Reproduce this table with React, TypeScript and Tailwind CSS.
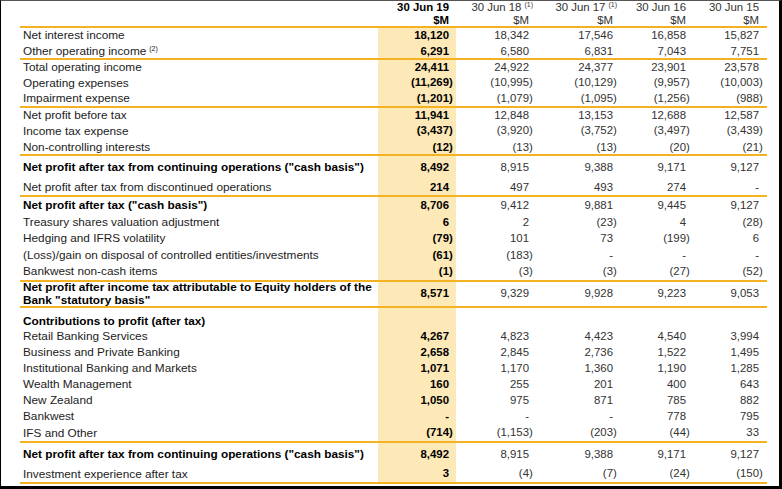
import React from 'react';

type Row =
    | { kind: 'line' }
    | { kind: 'row'; label: React.ReactNode; values: string[]; bold?: boolean; h: number; pt?: number };

const COLS = [
    { w: 'w-[78px]', pr: 'pr-[3px]' },
    { w: 'w-[79px]', pr: 'pr-[2px]' },
    { w: 'w-[84px]', pr: 'pr-[2px]' },
    { w: 'w-[73px]', pr: 'pr-[2px]' },
    { w: 'w-[75px]', pr: 'pr-[4px]' },
];

const Sup: React.FC<{ children: React.ReactNode }> = ({ children }) => (
    <span className="relative -top-[4px] ml-[3px] text-[7px] leading-none">{children}</span>
);

const ROWS: Row[] = [
    { kind: 'line' },
    { kind: 'row', h: 15, label: 'Net interest income', values: ['18,120', '18,342', '17,546', '16,858', '15,827'] },
    { kind: 'row', h: 14.5, pt: 2, label: <>Other operating income<Sup>(2)</Sup></>, values: ['6,291', '6,580', '6,831', '7,043', '7,751'] },
    { kind: 'line' },
    { kind: 'row', h: 15.5, label: 'Total operating income', values: ['24,411', '24,922', '24,377', '23,901', '23,578'] },
    { kind: 'row', h: 15.5, label: 'Operating expenses', values: ['(11,269)', '(10,995)', '(10,129)', '(9,957)', '(10,003)'] },
    { kind: 'row', h: 15.5, label: 'Impairment expense', values: ['(1,201)', '(1,079)', '(1,095)', '(1,256)', '(988)'] },
    { kind: 'line' },
    { kind: 'row', h: 15.3, label: 'Net profit before tax', values: ['11,941', '12,848', '13,153', '12,688', '12,587'] },
    { kind: 'row', h: 15.3, label: 'Income tax expense', values: ['(3,437)', '(3,920)', '(3,752)', '(3,497)', '(3,439)'] },
    { kind: 'row', h: 15.4, pt: 2, label: 'Non-controlling interests', values: ['(12)', '(13)', '(13)', '(20)', '(21)'] },
    { kind: 'line' },
    { kind: 'row', h: 22.5, pt: 1, bold: true, label: 'Net profit after tax from continuing operations ("cash basis")', values: ['8,492', '8,915', '9,388', '9,171', '9,127'] },
    { kind: 'row', h: 17, pt: 1, label: 'Net profit after tax from discontinued operations', values: ['214', '497', '493', '274', '-'] },
    { kind: 'line' },
    { kind: 'row', h: 16.5, bold: true, label: 'Net profit after tax ("cash basis")', values: ['8,706', '9,412', '9,881', '9,445', '9,127'] },
    { kind: 'row', h: 16.5, label: 'Treasury shares valuation adjustment', values: ['6', '2', '(23)', '4', '(28)'] },
    { kind: 'row', h: 16.5, label: 'Hedging and IFRS volatility', values: ['(79)', '101', '73', '(199)', '6'] },
    { kind: 'row', h: 16.5, label: '(Loss)/gain on disposal of controlled entities/investments', values: ['(61)', '(183)', '-', '-', '-'] },
    { kind: 'row', h: 16.5, label: 'Bankwest non-cash items', values: ['(1)', '(3)', '(3)', '(27)', '(52)'] },
    { kind: 'line' },
    { kind: 'row', h: 24, bold: true, label: <>Net profit after income tax attributable to Equity holders of the<br />Bank "statutory basis"</>, values: ['8,571', '9,329', '9,928', '9,223', '9,053'] },
    { kind: 'line' },
    { kind: 'row', h: 20, pt: 6, bold: true, label: 'Contributions to profit (after tax)', values: ['', '', '', '', ''] },
    { kind: 'row', h: 16.14, label: 'Retail Banking Services', values: ['4,267', '4,823', '4,423', '4,540', '3,994'] },
    { kind: 'row', h: 16.14, label: 'Business and Private Banking', values: ['2,658', '2,845', '2,736', '1,522', '1,495'] },
    { kind: 'row', h: 16.14, label: 'Institutional Banking and Markets', values: ['1,071', '1,170', '1,360', '1,190', '1,285'] },
    { kind: 'row', h: 16.14, label: 'Wealth Management', values: ['160', '255', '201', '400', '643'] },
    { kind: 'row', h: 16.14, label: 'New Zealand', values: ['1,050', '975', '871', '785', '882'] },
    { kind: 'row', h: 16.14, label: 'Bankwest', values: ['-', '-', '-', '778', '795'] },
    { kind: 'row', h: 16.14, label: 'IFS and Other', values: ['(714)', '(1,153)', '(203)', '(44)', '33'] },
    { kind: 'line' },
    { kind: 'row', h: 22, pt: 1, bold: true, label: 'Net profit after tax from continuing operations ("cash basis")', values: ['8,492', '8,915', '9,388', '9,171', '9,127'] },
    { kind: 'row', h: 17.3, pt: 1, label: 'Investment experience after tax', values: ['3', '(4)', '(7)', '(24)', '(150)'] },
    { kind: 'line' },
];

const Num: React.FC<{ v: string }> = ({ v }) => {
    const neg = v.startsWith('(');
    const body = neg ? v.slice(0, -1) : v;
    return (
        <>
            {body}
            <span className="inline-block w-[4px] text-left">{neg ? ')' : ''}</span>
        </>
    );
};

const HEADERS: { date: string; sup?: boolean }[] = [
    { date: '30 Jun 19' },
    { date: '30 Jun 18', sup: true },
    { date: '30 Jun 17', sup: true },
    { date: '30 Jun 16' },
    { date: '30 Jun 15' },
];

export default function App() {
    return (
        <div
            className="w-[782px] h-[489px] bg-white border-t border-l border-r-[3px] border-b-[3px] border-t-[#555] border-l-black border-r-black border-b-black overflow-hidden text-[11.4px] text-[#222]"
            style={{ fontFamily: '"Liberation Sans", Arial, sans-serif' }}
        >
            <div className="ml-[19px] w-[747px]">
                {/* header */}
                <div className="flex h-[25px] leading-[13px]">
                    <div className="w-[358px]" />
                    {HEADERS.map((h, i) => (
                        <div key={h.date} className={`${COLS[i].w} ${COLS[i].pr} text-right ${i === 0 ? 'font-bold text-black' : 'text-[#333]'}`}>
                            <div className="whitespace-nowrap">
                                {h.date}
                                {h.sup && <Sup>(1)</Sup>}
                                {!h.sup && <span className="inline-block w-[4px]" />}
                            </div>
                            <div>
                                $M<span className="inline-block w-[4px]" />
                            </div>
                        </div>
                    ))}
                </div>

                {ROWS.map((r, idx) =>
                    r.kind === 'line' ? (
                        <div key={idx} className="h-[2px] bg-[#f4b223]" />
                    ) : (
                        <div key={idx} className="flex" style={{ height: r.h }}>
                            <div
                                className={`w-[358px] pl-[3px] flex items-center text-[11.8px] leading-[12.5px] whitespace-nowrap ${r.bold ? 'font-bold text-black' : ''}`}
                                style={{ paddingTop: r.pt ?? 0 }}
                            >
                                <div>{r.label}</div>
                            </div>
                            {r.values.map((v, i) => (
                                <div
                                    key={i}
                                    className={`${COLS[i].w} ${COLS[i].pr} flex items-center justify-end whitespace-nowrap ${i === 0 ? 'bg-[#fde9b7] font-bold text-black' : 'text-[#333]'}`}
                                    style={{ paddingTop: r.pt ?? 0 }}
                                >
                                    <span>{v && <Num v={v} />}</span>
                                </div>
                            ))}
                        </div>
                    )
                )}
            </div>
        </div>
    );
}
